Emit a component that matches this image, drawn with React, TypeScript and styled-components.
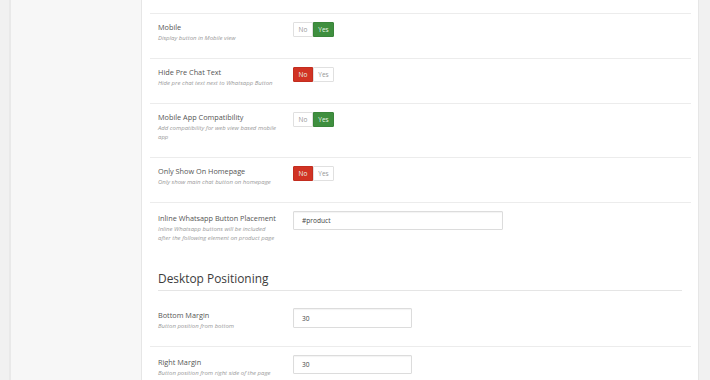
import React from "react";
import styled, { createGlobalStyle } from "styled-components";

const Global = createGlobalStyle`
  html, body { margin: 0; padding: 0; background: #f1f1f1; }
  body { font-family: "Open Sans", "Liberation Sans", sans-serif; }
  * { box-sizing: border-box; }
`;

const Page = styled.div`
  display: flex;
  width: 710px;
  height: 380px;
  overflow: hidden;
  background: #f1f1f1;
`;

const EdgeStrip = styled.div`
  width: 11px;
  flex: none;
  background: #f1f1f1;
  border-right: 2px solid #e9e9e9;
`;

const SidePanel = styled.div`
  width: 131px;
  flex: none;
  background: #f7f7f7;
  border-right: 1px solid #e6e6e6;
`;

const Main = styled.main`
  width: 557px;
  flex: none;
  background: #fff;
  padding: 13px 7px 0 8px;
  border-right: 1px solid #e6e6e6;
`;

const RightStrip = styled.div`
  flex: 1;
  background: #f1f1f1;
`;

const Row = styled.div<{ $noBorder?: boolean }>`
  display: grid;
  grid-template-columns: 120px 1fr;
  column-gap: 15px;
  align-items: start;
  padding: 8px 0 15px 8px;
  border-top: ${(p) => (p.$noBorder ? "none" : "1px solid #ececec")};
`;

const Label = styled.div<{ $input?: boolean }>`
  padding-top: ${(p) => (p.$input ? "2px" : "0")};
`;

const Title = styled.div`
  font-size: 7.3px;
  line-height: 11px;
  font-weight: 500;
  color: #555;
`;

const Hint = styled.div`
  margin-top: 1px;
  font-size: 6px;
  line-height: 9px;
  font-style: italic;
  color: #9a9a9a;
`;

const Toggle = styled.div`
  display: inline-flex;
  height: 15px;
`;

const ToggleBtn = styled.span<{ $on?: boolean; $tone?: "yes" | "no"; $w: number }>`
  width: ${(p) => p.$w}px;
  height: 15px;
  display: flex;
  align-items: center;
  justify-content: center;
  font-size: 6.5px;
  border: 1px solid
    ${(p) => (p.$on ? (p.$tone === "yes" ? "#3a853a" : "#c22d1f") : "#e0e0e0")};
  background: ${(p) => (p.$on ? (p.$tone === "yes" ? "#3f8f3f" : "#d13323") : "#fff")};
  color: ${(p) => (p.$on ? "#e8f2e8" : "#999")};
  &:first-child { border-radius: 1px 0 0 1px; }
  &:last-child { border-radius: 0 1px 1px 0; }
`;

const TextInput = styled.div<{ $w: number; $h: number }>`
  width: ${(p) => p.$w}px;
  height: ${(p) => p.$h}px;
  border: 1px solid #dcdcdc;
  border-radius: 1px;
  box-shadow: inset 0 1px 1px rgba(0, 0, 0, 0.05);
  display: flex;
  align-items: center;
  padding-left: 8px;
  font-size: 6.6px;
  color: #444;
`;

const Section = styled.div`
  margin: 12px 9px 9px 8px;
  padding-bottom: 4px;
  border-bottom: 1px solid #e5e5e5;
`;

const Heading = styled.h2`
  margin: 0;
  font-size: 11.9px;
  line-height: 16px;
  font-weight: 400;
  color: #3c3c3c;
`;

type ToggleRow = { title: string; hint: string; value: boolean };

const toggles: ToggleRow[] = [
  { title: "Mobile", hint: "Display button in Mobile view", value: true },
  { title: "Hide Pre Chat Text", hint: "Hide pre chat text next to Whatsapp Button", value: false },
  { title: "Mobile App Compatibility", hint: "Add compatibility for web view based mobile app", value: true },
  { title: "Only Show On Homepage", hint: "Only show main chat button on homepage", value: false },
];

const YesNo = ({ value }: { value: boolean }) => (
  <Toggle>
    <ToggleBtn $w={20} $on={!value} $tone="no">No</ToggleBtn>
    <ToggleBtn $w={21} $on={value} $tone="yes">Yes</ToggleBtn>
  </Toggle>
);

export default function App() {
  return (
    <>
      <Global />
      <Page>
        <EdgeStrip />
        <SidePanel />
        <Main>
          {toggles.map((t) => (
            <Row key={t.title}>
              <Label>
                <Title>{t.title}</Title>
                <Hint>{t.hint}</Hint>
              </Label>
              <YesNo value={t.value} />
            </Row>
          ))}
          <Row>
            <Label $input>
              <Title>Inline Whatsapp Button Placement</Title>
              <Hint>Inline Whatsapp buttons will be included after the following element on product page</Hint>
            </Label>
            <TextInput $w={210} $h={19}>#product</TextInput>
          </Row>
          <Section>
            <Heading>Desktop Positioning</Heading>
          </Section>
          <Row $noBorder>
            <Label $input>
              <Title>Bottom Margin</Title>
              <Hint>Button position from bottom</Hint>
            </Label>
            <TextInput $w={119} $h={20}>30</TextInput>
          </Row>
          <Row>
            <Label $input>
              <Title>Right Margin</Title>
              <Hint>Button position from right side of the page</Hint>
            </Label>
            <TextInput $w={119} $h={19}>30</TextInput>
          </Row>
        </Main>
        <RightStrip />
      </Page>
    </>
  );
}
